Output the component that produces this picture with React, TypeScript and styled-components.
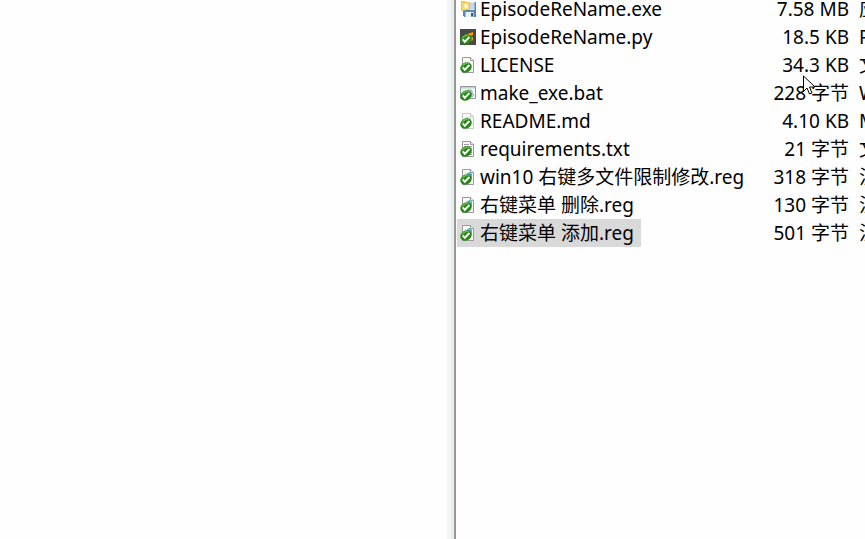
import React from "react";
import styled, { createGlobalStyle } from "styled-components";

const Page = createGlobalStyle`
  * { box-sizing: border-box; }
  body { margin: 0; background: #fefefe; color: #000; font-family: "Noto Sans", "Noto Sans CJK SC", sans-serif; font-size: 19px; }
`;

const Window = styled.main`
  display: grid;
  grid-template-columns: 454fr 411fr;
  height: 100vh;
  overflow: hidden;
  cursor: default;
`;

const EmptyPane = styled.section`
  background: linear-gradient(to left, #e9eded 0 3px, #f1f6f8 4px 6px, #fefefe 9px);
`;

const FilePane = styled.section`
  border-left: 2px solid #989898;
  overflow: hidden;
  position: relative;
`;

const FileTable = styled.table`
  width: 100%;
  min-width: 409px;
  margin-top: -5px;
  border-collapse: collapse;
  table-layout: fixed;
`;

const Row = styled.tr`
  height: 28px;
`;

const Cell = styled.td<{ $end?: boolean }>`
  padding: 0;
  height: 28px;
  line-height: 28px;
  white-space: nowrap;
  text-align: ${(p) => (p.$end ? "right" : "left")};
`;

const TypeCell = styled(Cell)`
  padding-left: 10px;
  overflow: hidden;
`;

const FileName = styled.div<{ $selected?: boolean }>`
  display: inline-flex;
  align-items: center;
  gap: 4px;
  height: 28px;
  margin-left: 1px;
  padding: 0 7px 0 3px;
  vertical-align: top;
  background: ${(p) => (p.$selected ? "#d9d9d9" : "transparent")};
`;

const Icon = styled.svg`
  width: 16px;
  height: 16px;
  flex: none;
`;

const Pointer = styled.svg`
  position: absolute;
  left: 347px;
  top: 75px;
  width: 13px;
  height: 21px;
`;

type Kind = "exe" | "py" | "blank" | "bat" | "md" | "txt" | "reg";

const Tick = () => (
  <g>
    <ellipse cx="6" cy="10.500" rx="6" ry="5" transform="rotate(-35 6 10.500)" fill="#258a14" />
    <path d="M1.300 10.500C2 6.500 6.500 4.500 10 6.500 6.500 6.500 4 8 1.300 10.500" fill="#6fb75c" />
    <path d="M2.800 10.300l2 2.500 4.600-4.800" fill="none" stroke="#fff" strokeWidth="1.900" />
  </g>
);

const FileIcon = ({ kind }: { kind: Kind }) => (
  <Icon viewBox="0 0 16 16" aria-hidden="true">
    {kind === "exe" && (
      <g>
        <path d="M3 1h12.500l.5 1v14H4.500L3 14.500z" fill="#5087ba" />
        <path d="M9 1h5.500v8H6V7z" fill="#dce7ee" />
        <path d="M10 3h4M10 5h4M9 7h5" stroke="#b4cad9" />
        <path d="M5.500 11h8v5h-8z" fill="#eef0ec" />
        <path d="M11 12h2v3.500h-2z" fill="#365b7c" />
        <path d="M1 0h4l1 1h4v7.500L2 10 1 9z" fill="#edbf44" />
        <path d="M2 1.500h7v6L2 9z" fill="#f9d967" />
        <path d="M4.500 3h2.500v2h1.500v2.500h-4z" fill="#fff7cf" />
      </g>
    )}
    {kind === "py" && (
      <g>
        <path d="M0 0h16v16H0z" fill="#484848" />
        <path d="M4.500 6L13 3v3L9.500 7.200 13 8.300v3L9 12.500z" fill="#ff9800" />
      </g>
    )}
    {kind === "bat" && (
      <g>
        <path d="M.5 1.500h15v12H.5z" fill="#f7fafb" stroke="#909aa0" />
        <path d="M1 2h14v1.500H1z" fill="#c5cdd2" />
        <circle cx="9.500" cy="7.500" r="2.500" fill="none" stroke="#9ebdca" strokeWidth="1.500" />
        <circle cx="12" cy="10" r="1.500" fill="none" stroke="#7fa8c0" />
      </g>
    )}
    {["blank", "md", "txt", "reg"].includes(kind) && (
      <g>
        <path
          d="M2.500.5h8l3 3v12h-11z"
          fill="#fafafa"
          stroke={kind === "md" ? "#c4c8ca" : "#999"}
        />
        <path d="M10.500.5v3h3" fill="#eee" stroke={kind === "md" ? "#c4c8ca" : "#999"} />
        {kind === "md" && <path d="M5 4h6v8H5z" fill="#d3e2ed" />}
        {kind === "txt" && <path d="M4 3.500h5M4 5.500h8M8 7.500h4M9 9.500h3M9 11.500h3M8 13.500h4" stroke="#999" />}
        {kind === "reg" && <path d="M7 4l3-1 2 2v4l-3 2z" fill="#58a9cf" />}
      </g>
    )}
    {kind !== "exe" && <Tick />}
  </Icon>
);

const files: { name: string; size: string; type: string; kind: Kind; selected?: boolean }[] = [
  { name: "EpisodeReName.exe", size: "7.58 MB", type: "应用程序", kind: "exe" },
  { name: "EpisodeReName.py", size: "18.5 KB", type: "Python", kind: "py" },
  { name: "LICENSE", size: "34.3 KB", type: "文件", kind: "blank" },
  { name: "make_exe.bat", size: "228 字节", type: "Windows", kind: "bat" },
  { name: "README.md", size: "4.10 KB", type: "Markdown", kind: "md" },
  { name: "requirements.txt", size: "21 字节", type: "文本文档", kind: "txt" },
  { name: "win10 右键多文件限制修改.reg", size: "318 字节", type: "注册表项", kind: "reg" },
  { name: "右键菜单 删除.reg", size: "130 字节", type: "注册表项", kind: "reg" },
  { name: "右键菜单 添加.reg", size: "501 字节", type: "注册表项", kind: "reg", selected: true },
];

export default function App() {
  return (
    <Window lang="zh-CN">
      <Page />
      <EmptyPane />
      <FilePane>
        <FileTable>
          <colgroup>
            <col />
            <col width="93" />
            <col width="16" />
          </colgroup>
          <tbody>
            {files.map((f) => (
              <Row key={f.name} aria-selected={!!f.selected}>
                <Cell>
                  <FileName $selected={f.selected}>
                    <FileIcon kind={f.kind} />
                    {f.name}
                  </FileName>
                </Cell>
                <Cell $end>{f.size}</Cell>
                <TypeCell>{f.type}</TypeCell>
              </Row>
            ))}
          </tbody>
        </FileTable>
        <Pointer viewBox="0 0 13 21" aria-hidden="true">
          <path d="M.5 1v15.500l3.500-3.500 2.500 6 2.500-1-2.500-6H12z" fill="#fff" stroke="#000" />
        </Pointer>
      </FilePane>
    </Window>
  );
}
